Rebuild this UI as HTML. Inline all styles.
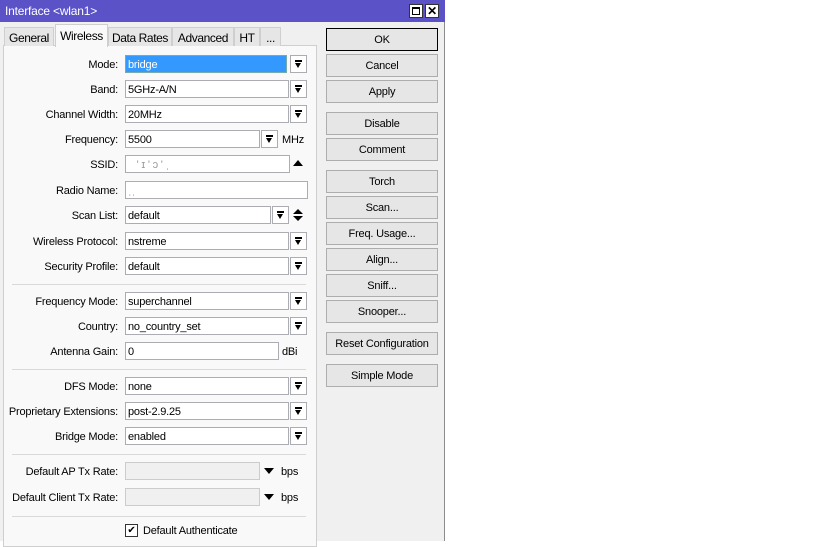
<!DOCTYPE html>
<html><head><meta charset="utf-8"><style>
body{margin:0;width:819px;height:541px;background:#fff;position:relative;overflow:hidden;font-family:"Liberation Sans",sans-serif;font-size:11px;letter-spacing:-0.2px;color:#000;white-space:nowrap}
.a{position:absolute}
.win{left:0;top:0;width:444px;height:541px;background:#f0f0f0;border-right:1px solid #8d8d8d}
.title{left:0;top:0;width:445px;height:22px;background:#5a52c6;color:#fff;line-height:22px;font-size:12px}
.tab{top:27px;height:18px;background:#e6e6e6;border:1px solid #cfcfcf;border-bottom:none;line-height:20px;text-align:center;font-size:12px;letter-spacing:-0.4px}
.panel{left:3px;top:45px;width:312px;height:500px;background:#f9f9f9;border:1px solid #cfcfcf}
.lbl{width:218px;left:-100px;text-align:right;height:18px;line-height:20px}
.in{height:16px;border:1px solid #abadb3;background:#fff;line-height:18px;padding-left:2px;overflow:hidden}
.dd{width:15px;height:16px;border:1px solid #abadb3;background:#fff}
.dd:after{content:"";position:absolute;left:4px;top:4px;width:7px;height:1.5px;background:#000}
.dd:before{content:"";position:absolute;left:4px;top:7px;border-left:3.5px solid transparent;border-right:3.5px solid transparent;border-top:5px solid #000}
.sep{left:12px;width:294px;height:1px;background:#d9d9d9}
.btn{left:326px;width:110px;height:21px;border:1px solid #adadad;background:#e6e6e6;text-align:center;line-height:23px}
.tri{width:0;height:0;border-left:5px solid transparent;border-right:5px solid transparent}
</style></head><body>
<div class="a win"></div>
<div class="a title"><span style="margin-left:5px">Interface &lt;wlan1&gt;</span></div>
<div class="a" style="left:409px;top:4px;width:14px;height:14px;background:#fff;border:1px solid #333;box-sizing:border-box"><div class="a" style="left:2px;top:2px;width:8px;height:8px;border:1px solid #000;border-top-width:2px;box-sizing:border-box"></div></div>
<div class="a" style="left:425px;top:4px;width:14px;height:14px;background:#fff;border:1px solid #333;box-sizing:border-box;font-weight:bold;font-size:12px;line-height:12px;text-align:center">✕</div>

<div class="a panel"></div>
<div class="a tab" style="left:4px;width:48px">General</div>
<div class="a tab" style="left:55px;top:24px;height:22px;width:51px;background:#f9f9f9;line-height:22px">Wireless</div>
<div class="a tab" style="left:108px;width:62px">Data Rates</div>
<div class="a tab" style="left:172px;width:60px">Advanced</div>
<div class="a tab" style="left:234px;width:24px">HT</div>
<div class="a tab" style="left:260px;width:19px">...</div>

<div class="a lbl" style="top:55px">Mode:</div><div class="a in" style="left:125px;top:55px;width:158px;background:#3399ff;color:#fff;border-color:#7aa">bridge</div><div class="a dd" style="left:290px;top:55px"></div>
<div class="a lbl" style="top:80px">Band:</div><div class="a in" style="left:125px;top:80px;width:160px">5GHz-A/N</div><div class="a dd" style="left:290px;top:80px"></div>
<div class="a lbl" style="top:105px">Channel Width:</div><div class="a in" style="left:125px;top:105px;width:160px">20MHz</div><div class="a dd" style="left:290px;top:105px"></div>
<div class="a lbl" style="top:130px">Frequency:</div><div class="a in" style="left:125px;top:130px;width:131px">5500</div><div class="a dd" style="left:261px;top:130px"></div><div class="a" style="left:282px;top:134px">MHz</div>
<div class="a lbl" style="top:155px">SSID:</div><div class="a in" style="left:125px;top:155px;width:161px;color:#999">&nbsp; &nbsp;' ɪ ' ɔ ' ˌ</div><div class="a tri" style="left:293px;top:160px;border-bottom:6px solid #000"></div>
<div class="a lbl" style="top:181px">Radio Name:</div><div class="a in" style="left:125px;top:181px;width:179px;color:#999">ˌˌ</div>
<div class="a lbl" style="top:206px">Scan List:</div><div class="a in" style="left:125px;top:206px;width:142px">default</div><div class="a dd" style="left:272px;top:206px"></div><div class="a tri" style="left:293px;top:209px;border-bottom:5px solid #000"></div><div class="a tri" style="left:293px;top:216px;border-top:5px solid #000"></div>
<div class="a lbl" style="top:232px">Wireless Protocol:</div><div class="a in" style="left:125px;top:232px;width:160px">nstreme</div><div class="a dd" style="left:290px;top:232px"></div>
<div class="a lbl" style="top:257px">Security Profile:</div><div class="a in" style="left:125px;top:257px;width:160px">default</div><div class="a dd" style="left:290px;top:257px"></div>
<div class="a sep" style="top:284px"></div>
<div class="a lbl" style="top:292px">Frequency Mode:</div><div class="a in" style="left:125px;top:292px;width:160px">superchannel</div><div class="a dd" style="left:290px;top:292px"></div>
<div class="a lbl" style="top:317px">Country:</div><div class="a in" style="left:125px;top:317px;width:160px">no_country_set</div><div class="a dd" style="left:290px;top:317px"></div>
<div class="a lbl" style="top:342px">Antenna Gain:</div><div class="a in" style="left:125px;top:342px;width:150px">0</div><div class="a" style="left:282px;top:346px">dBi</div>
<div class="a sep" style="top:369px"></div>
<div class="a lbl" style="top:377px">DFS Mode:</div><div class="a in" style="left:125px;top:377px;width:160px">none</div><div class="a dd" style="left:290px;top:377px"></div>
<div class="a lbl" style="top:402px">Proprietary Extensions:</div><div class="a in" style="left:125px;top:402px;width:160px">post-2.9.25</div><div class="a dd" style="left:290px;top:402px"></div>
<div class="a lbl" style="top:427px">Bridge Mode:</div><div class="a in" style="left:125px;top:427px;width:160px">enabled</div><div class="a dd" style="left:290px;top:427px"></div>
<div class="a sep" style="top:454px"></div>
<div class="a lbl" style="top:462px">Default AP Tx Rate:</div><div class="a in" style="left:125px;top:462px;width:131px;background:#f0f0f0;border-color:#ccc"></div><div class="a tri" style="left:264px;top:468px;border-top:6px solid #000"></div><div class="a" style="left:281px;top:466px">bps</div>
<div class="a lbl" style="top:488px">Default Client Tx Rate:</div><div class="a in" style="left:125px;top:488px;width:131px;background:#f0f0f0;border-color:#ccc"></div><div class="a tri" style="left:264px;top:494px;border-top:6px solid #000"></div><div class="a" style="left:281px;top:492px">bps</div>
<div class="a sep" style="top:516px"></div>
<div class="a" style="left:125px;top:524px;width:11px;height:11px;border:1px solid #333;background:#fff;font-size:10px;line-height:11px;text-align:center">✔</div><div class="a" style="left:143px;top:525px">Default Authenticate</div>

<div class="a btn" style="top:28px;border-color:#000">OK</div>
<div class="a btn" style="top:54px">Cancel</div>
<div class="a btn" style="top:80px">Apply</div>
<div class="a btn" style="top:112px">Disable</div>
<div class="a btn" style="top:138px">Comment</div>
<div class="a btn" style="top:170px">Torch</div>
<div class="a btn" style="top:196px">Scan...</div>
<div class="a btn" style="top:222px">Freq. Usage...</div>
<div class="a btn" style="top:248px">Align...</div>
<div class="a btn" style="top:274px">Sniff...</div>
<div class="a btn" style="top:300px">Snooper...</div>
<div class="a btn" style="top:332px">Reset Configuration</div>
<div class="a btn" style="top:364px">Simple Mode</div>
</body></html>
